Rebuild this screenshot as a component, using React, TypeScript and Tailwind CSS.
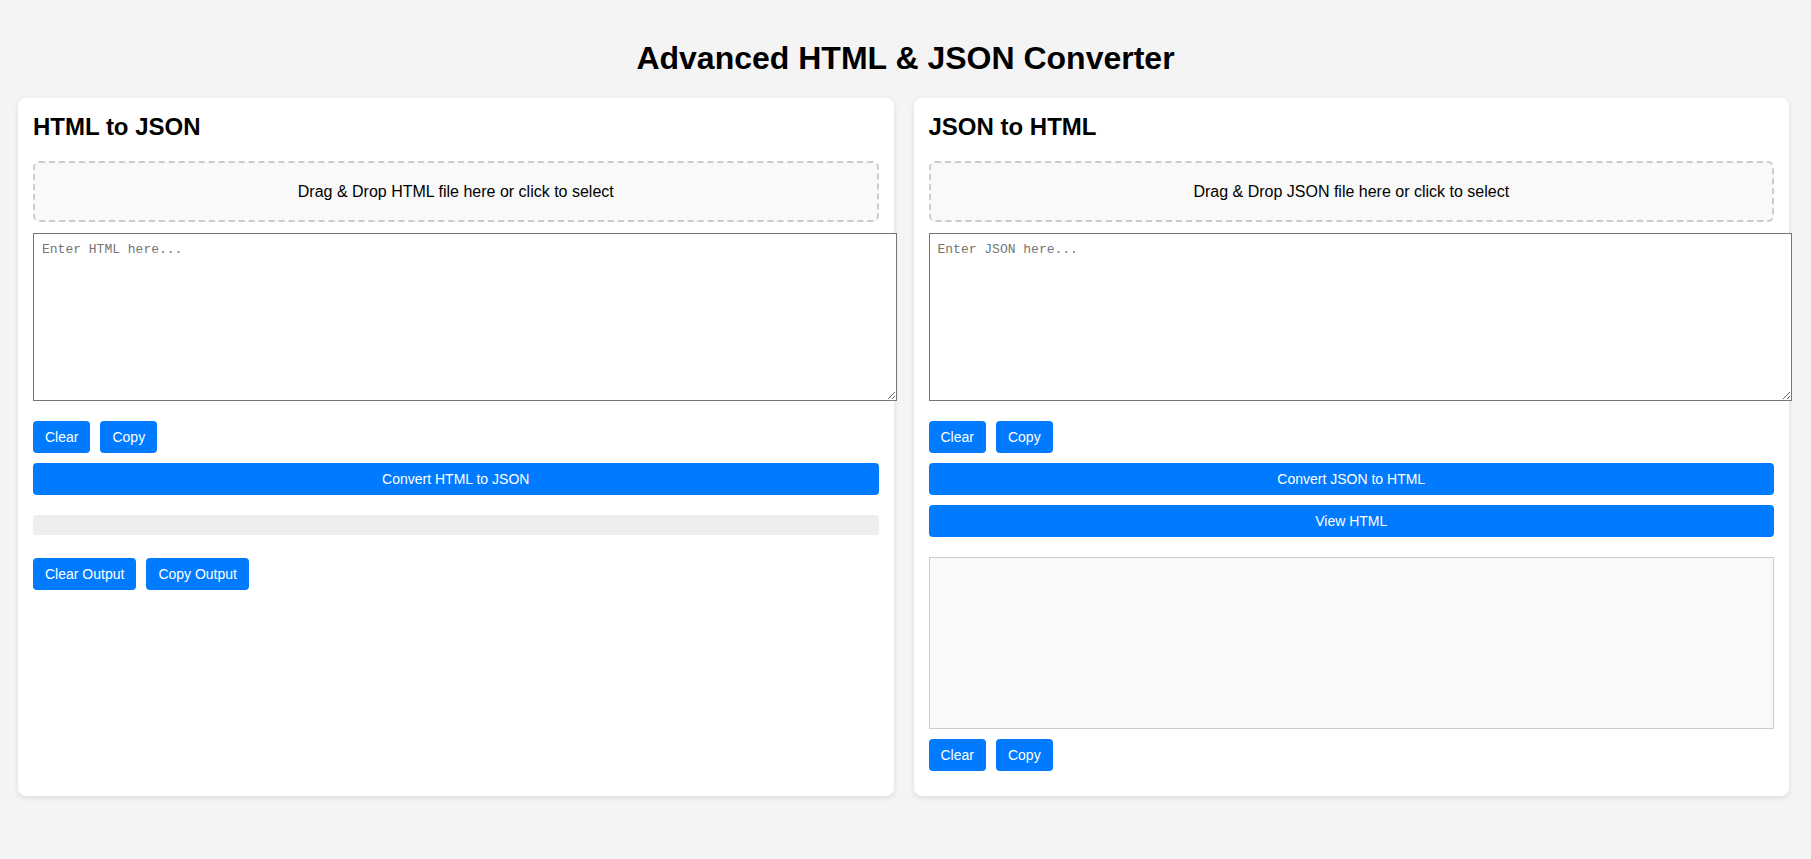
import React from "react";

function Btn({ children, full }: { children: React.ReactNode; full?: boolean }) {
  return (
    <button
      className={
        full
          ? "block w-full bg-[#007bff] text-white text-[14px] leading-[16px] py-2 px-3 rounded-[4px] text-center"
          : "bg-[#007bff] text-white text-[14px] leading-[16px] py-2 px-3 rounded-[4px]"
      }
    >
      {children}
    </button>
  );
}

function DropZone({ label }: { label: string }) {
  return (
    <div className="mt-[21px] border-2 border-dashed border-[#cccccc] rounded-[6px] bg-[#f9f9f9] py-[20px] text-center text-[16px] leading-[17px] text-black">
      {label}
    </div>
  );
}

function Area({ placeholder }: { placeholder: string }) {
  return (
    <textarea
      placeholder={placeholder}
      className="block mt-[11px] w-[calc(100%+18px)] h-[168px] p-2 border border-[#767676] bg-white font-['Liberation_Mono','DejaVu_Sans_Mono',monospace] text-[13px] leading-[15px] text-black placeholder:text-[#757575] outline-none"
    />
  );
}

export default function App() {
  return (
    <div className="min-h-screen bg-[#f4f4f4] font-['Liberation_Sans',Arial,sans-serif] text-black">
      <h1 className="pt-[40px] mb-[21px] text-center text-[32px] font-bold leading-[37px]">
        Advanced HTML &amp; JSON Converter
      </h1>
      <div className="flex gap-[20px] pl-[18px] pr-[22px]">
        <div className="flex-1 min-w-0 bg-white rounded-lg shadow-[0_2px_5px_rgba(0,0,0,0.1)] px-[15px] pt-[15px] pb-[25px]">
          <h2 className="text-[24px] font-bold leading-[27px]">HTML to JSON</h2>
          <DropZone label="Drag & Drop HTML file here or click to select" />
          <Area placeholder="Enter HTML here..." />
          <div className="flex gap-[10px] mt-[20px]">
            <Btn>Clear</Btn>
            <Btn>Copy</Btn>
          </div>
          <div className="mt-[10px]">
            <Btn full>Convert HTML to JSON</Btn>
          </div>
          <div className="mt-[20px] h-[20px] rounded-[4px] bg-[#eeeeee]" />
          <div className="flex gap-[10px] mt-[23px]">
            <Btn>Clear Output</Btn>
            <Btn>Copy Output</Btn>
          </div>
        </div>
        <div className="flex-1 min-w-0 bg-white rounded-lg shadow-[0_2px_5px_rgba(0,0,0,0.1)] px-[15px] pt-[15px] pb-[25px]">
          <h2 className="text-[24px] font-bold leading-[27px]">JSON to HTML</h2>
          <DropZone label="Drag & Drop JSON file here or click to select" />
          <Area placeholder="Enter JSON here..." />
          <div className="flex gap-[10px] mt-[20px]">
            <Btn>Clear</Btn>
            <Btn>Copy</Btn>
          </div>
          <div className="mt-[10px]">
            <Btn full>Convert JSON to HTML</Btn>
          </div>
          <div className="mt-[10px]">
            <Btn full>View HTML</Btn>
          </div>
          <div className="mt-[20px] h-[172px] border border-[#cccccc] bg-[#f9f9f9]" />
          <div className="flex gap-[10px] mt-[10px]">
            <Btn>Clear</Btn>
            <Btn>Copy</Btn>
          </div>
        </div>
      </div>
    </div>
  );
}
